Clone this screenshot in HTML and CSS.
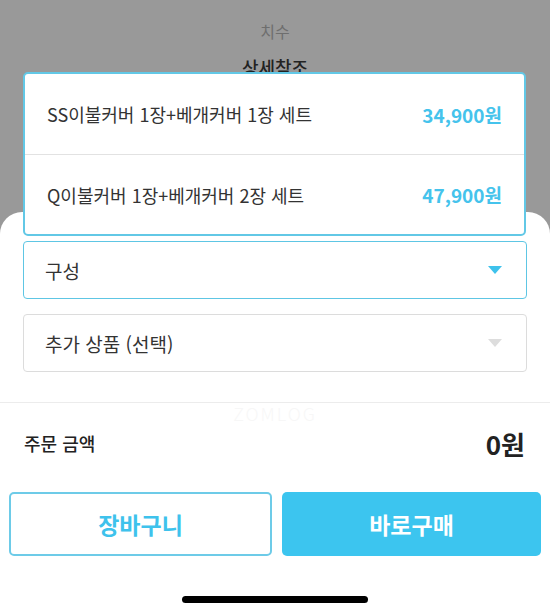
FILE: index.html
```html
<!DOCTYPE html>
<html lang="ko">
<head>
    <meta charset="UTF-8">
    <meta name="viewport" content="width=device-width, initial-scale=1.0">
    <link rel="stylesheet" href="styles.css">
    <title>옵션 선택</title>
</head>
<body>
    <div class="screen">
        <div class="backdrop">
            <div class="spec-label">치수</div>
            <div class="spec-value">상세참조</div>
        </div>

        <div class="sheet">
            <div class="select active">
                <span>구성</span>
                <span class="arrow"></span>
            </div>
            <div class="select">
                <span>추가 상품 (선택)</span>
                <span class="arrow"></span>
            </div>

            <div class="divider">
                <span class="watermark">ZOMLOG</span>
            </div>

            <div class="total">
                <span class="total-label">주문 금액</span>
                <span class="total-price">0원</span>
            </div>

            <div class="buttons">
                <button class="btn btn-cart">장바구니</button>
                <button class="btn btn-buy">바로구매</button>
            </div>

            <div class="home-bar"></div>
        </div>

        <!-- open dropdown for 구성 -->
        <ul class="options">
            <li class="option">
                <span class="option-name">SS이불커버 1장+베개커버 1장 세트</span>
                <span class="option-price">34,900원</span>
            </li>
            <li class="option">
                <span class="option-name">Q이불커버 1장+베개커버 2장 세트</span>
                <span class="option-price">47,900원</span>
            </li>
        </ul>
    </div>
</body>
</html>
```

FILE: styles.css
```css
* {
    box-sizing: border-box;
}

body {
    margin: 0;
    font-family: "Noto Sans CJK KR", "Noto Sans", sans-serif;
    color: #333;
}

.screen {
    position: relative;
    width: 550px;
    height: 616px;
    overflow: hidden;
    background-color: #999;
}

.backdrop {
    height: 212px;
    text-align: center;
    padding-top: 18px;
}

.spec-label {
    font-size: 16px;
    color: #6e6e6e;
    line-height: 26px;
}

.spec-value {
    margin-top: 10px;
    font-size: 18px;
    font-weight: 500;
    color: #222;
    line-height: 26px;
}

.sheet {
    height: 404px;
    background-color: #fff;
    border-radius: 22px 22px 0 0;
    padding-top: 29px;
}

.select {
    display: flex;
    justify-content: space-between;
    align-items: center;
    height: 58px;
    margin: 0 23px 15px 23px;
    padding: 0 24px 0 21px;
    border: 1px solid #dcdcdc;
    border-radius: 4px;
    font-size: 19px;
    color: #333;
}

.select .arrow {
    width: 0;
    height: 0;
    border-left: 7px solid transparent;
    border-right: 7px solid transparent;
    border-top: 8px solid #ddd;
}

.select.active {
    border-color: #5ec6e4;
}

.select.active .arrow {
    border-top-color: #3ec2ec;
}

.divider {
    position: relative;
    margin-top: 30px;
    height: 1px;
    background-color: #ececec;
}

.watermark {
    position: absolute;
    left: 50%;
    top: -2px;
    transform: translateX(-50%);
    font-size: 18px;
    font-weight: 300;
    letter-spacing: 2px;
    color: #f7f7f7;
}

.total {
    display: flex;
    justify-content: space-between;
    align-items: center;
    height: 80px;
    padding: 0 25px 0 24px;
}

.total-label {
    font-size: 18px;
    font-weight: 500;
    color: #222;
}

.total-price {
    font-size: 26px;
    font-weight: 700;
    color: #222;
}

.buttons {
    display: flex;
    gap: 10px;
    padding: 9px 9px 0 9px;
}

.btn {
    flex: 1;
    height: 64px;
    border-radius: 5px;
    font-family: inherit;
    font-size: 23px;
    font-weight: 700;
}

.btn-cart {
    background-color: #fff;
    border: 2px solid #6dcbe8;
    color: #3ec2ec;
}

.btn-buy {
    background-color: #3cc5ef;
    border: none;
    color: #fff;
}

.home-bar {
    width: 186px;
    height: 7px;
    margin: 40px auto 0 auto;
    background-color: #000;
    border-radius: 4px;
}

.options {
    position: absolute;
    top: 72px;
    left: 23px;
    width: 503px;
    margin: 0;
    padding: 0;
    list-style: none;
    background-color: #fff;
    border: 2px solid #62c8e6;
    border-radius: 5px;
}

.option {
    display: flex;
    justify-content: space-between;
    align-items: center;
    height: 80px;
    padding: 0 22px 0 22px;
}

.option + .option {
    border-top: 1px solid #e2e2e2;
}

.option-name {
    font-size: 18px;
    color: #333;
}

.option-price {
    font-size: 19px;
    font-weight: 700;
    color: #45c3ec;
}
```
